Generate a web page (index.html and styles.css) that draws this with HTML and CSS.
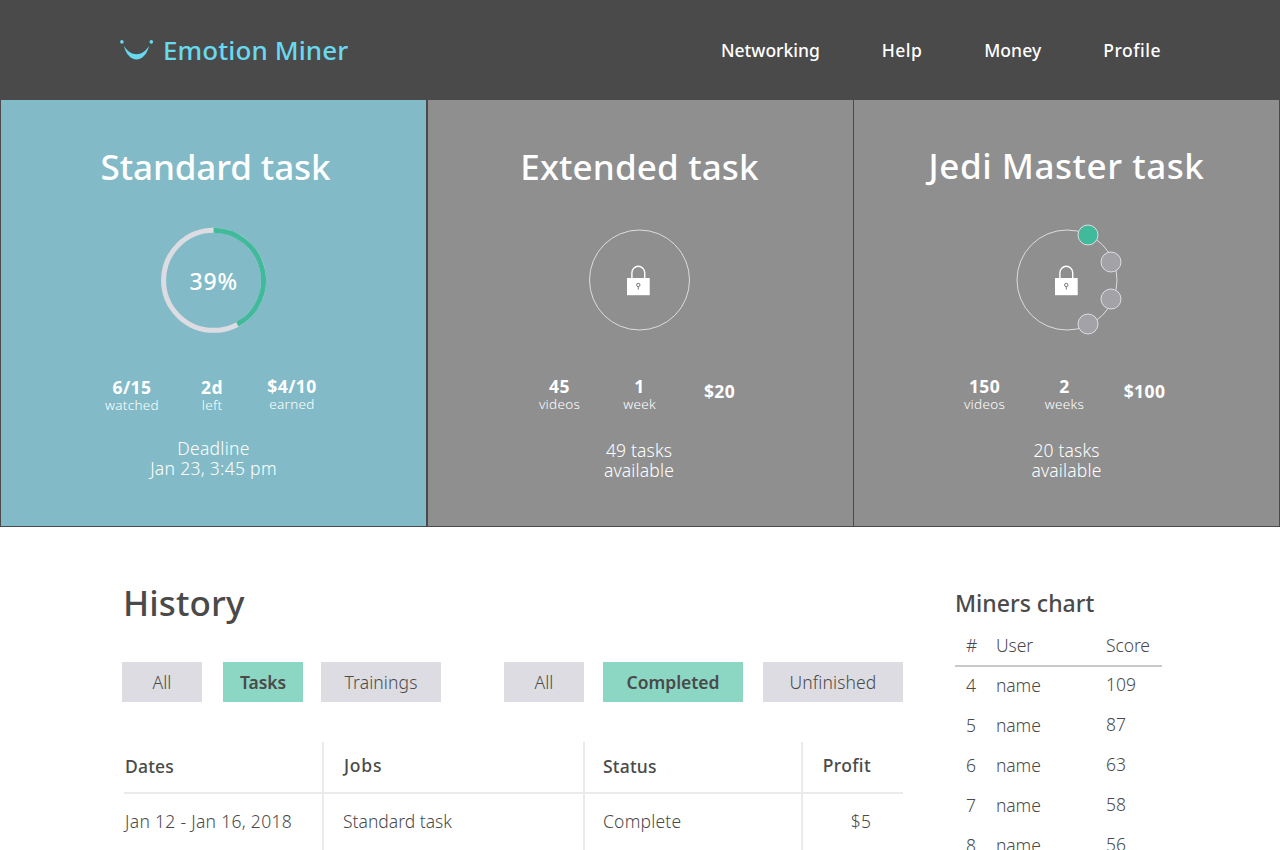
FILE: index.html
```html
<!DOCTYPE html>
<html lang="en">
<head>
<meta charset="utf-8">
<title>Emotion Miner</title>
<link rel="stylesheet" href="styles.css">
</head>
<body>
<header class="header">
  <a class="logo">
    <svg class="smile" width="34" height="20" viewBox="0 0 34 20">
      <circle cx="1.9" cy="1.9" r="1.8"/><circle cx="31.3" cy="1.9" r="1.8"/>
      <path d="M3.800 5.800C8 12 12 14.200 16.500 14.200S25 12 29.200 5.800C27 14.500 22 19.500 16.500 19.500S6 14.500 3.800 5.800Z"/>
    </svg>
    <span>Emotion Miner</span>
  </a>
  <nav class="nav">
    <a class="nav-networking">Networking</a>
    <a class="nav-help">Help</a>
    <a class="nav-money">Money</a>
    <a class="nav-profile">Profile</a>
  </nav>
</header>

<section class="cards">
  <article class="card card-standard">
    <h2>Standard task</h2>
    <svg class="dial" width="120" height="120" viewBox="0 0 120 120">
      <circle cx="59.600" cy="60.300" r="50" fill="none" stroke="#dddce2" stroke-width="5"/>
      <path d="M59.600 10.300A50 50 0 0 1 83.300 104.300" fill="none" stroke="#41ba9b" stroke-width="5"/>
      <text class="percent" x="59.700" y="69.500" text-anchor="middle">39%</text>
    </svg>
    <div class="stats">
      <div class="stat"><b>6/15</b><span>watched</span></div>
      <div class="stat"><b>2d</b><span>left</span></div>
      <div class="stat raised"><b>$4/10</b><span>earned</span></div>
    </div>
    <p class="deadline">Deadline<br>Jan 23, 3:45 pm</p>
  </article>

  <article class="card card-extended">
    <h2>Extended task</h2>
    <svg class="dial" width="120" height="120" viewBox="0 0 120 120">
      <circle cx="59.500" cy="60" r="50" fill="none" stroke="#dddce2"/>
      <path d="M51.900 58V52.700a6.400 6.400 0 0 1 12.800 0V58" fill="none" stroke="#fff" stroke-width="1.400"/>
      <rect x="47" y="58" width="22.700" height="17.200" fill="#fff"/>
      <circle cx="58.300" cy="65" r="1.700" fill="none" stroke="#777"/>
      <path d="M58.300 66.700v2.800" stroke="#777"/>
    </svg>
    <div class="stats">
      <div class="stat"><b>45</b><span>videos</span></div>
      <div class="stat"><b>1</b><span>week</span></div>
      <div class="stat price"><b>$20</b></div>
    </div>
    <p>49 tasks<br>available</p>
  </article>

  <article class="card card-jedi">
    <h2>Jedi Master task</h2>
    <svg class="dial" width="120" height="120" viewBox="0 0 120 120">
      <circle cx="60" cy="60" r="50" fill="none" stroke="#dddce2"/>
      <path d="M52.900 58V52.700a6.400 6.400 0 0 1 12.800 0V58" fill="none" stroke="#fff" stroke-width="1.400"/>
      <rect x="48" y="58" width="22.700" height="17.200" fill="#fff"/>
      <circle cx="59.300" cy="65" r="1.700" fill="none" stroke="#777"/>
      <path d="M59.300 66.700v2.800" stroke="#777"/>
      <g fill="#a2a2a7" stroke="#dddce2">
        <circle cx="81" cy="15" r="10" fill="#41ba9b"/>
        <circle cx="104" cy="42" r="10"/>
        <circle cx="104" cy="79" r="10"/>
        <circle cx="81" cy="104" r="10"/>
      </g>
    </svg>
    <div class="stats">
      <div class="stat"><b>150</b><span>videos</span></div>
      <div class="stat"><b>2</b><span>weeks</span></div>
      <div class="stat price"><b>$100</b></div>
    </div>
    <p>20 tasks<br>available</p>
  </article>
</section>

<main class="main">
  <section class="history">
    <h1>History</h1>
    <div class="filters">
      <div class="group kinds">
        <button class="btn w80">All</button>
        <button class="btn w80 active">Tasks</button>
        <button class="btn w120">Trainings</button>
      </div>
      <div class="group states">
        <button class="btn w80">All</button>
        <button class="btn w140 active">Completed</button>
        <button class="btn w140">Unfinished</button>
      </div>
    </div>
    <div class="table">
      <div class="cell head dates">Dates</div>
      <div class="cell head up jobs">Jobs</div>
      <div class="cell head">Status</div>
      <div class="cell head up profit">Profit</div>
      <div class="cell span-dates">Jan 12 - Jan 16, 2018</div>
      <div class="cell job">Standard task</div>
      <div class="cell complete">Complete</div>
      <div class="cell profit">$5</div>
    </div>
  </section>

  <aside class="chart">
    <h3>Miners chart</h3>
    <div class="row labels"><span>#</span><span>User</span><span>Score</span></div>
    <div class="row"><span>4</span><span>name</span><span class="score">109</span></div>
    <div class="row"><span>5</span><span>name</span><span class="score">87</span></div>
    <div class="row"><span>6</span><span>name</span><span class="score">63</span></div>
    <div class="row"><span>7</span><span>name</span><span class="score">58</span></div>
    <div class="row"><span>8</span><span>name</span><span class="score">56</span></div>
  </aside>
</main>
</body>
</html>
```
FILE: styles.css
```css
* { box-sizing: border-box; }

body {
  margin: 0;
  height: 850px;
  overflow: hidden;
  background: #fff;
  color: #4a4a4a;
  font: 300 17.5px/20px "Noto Sans", "Open Sans", sans-serif;
}

h1, h2, h3, p { margin: 0; font-weight: 500; }

/* Header */
.header {
  display: flex;
  justify-content: space-between;
  height: 100px;
  padding: 0 119px 0 120px;
  background: #4a4a4a;
  align-items: center;
}
.logo {
  display: flex;
  align-items: center;
  gap: 9px;
  color: #68d9ee;
  font-size: 26px;
  font-weight: 500;
  line-height: 36px;
  letter-spacing: 0.1px;
}
.smile { fill: #68d9ee; }
.nav {
  display: flex;
  gap: 62px;
  color: #fff;
  font-weight: 500;
}
.nav-networking { letter-spacing: 0; }
.nav-help { letter-spacing: 0.4px; }
.nav-money { letter-spacing: 0.1px; }
.nav-profile { letter-spacing: 0.5px; }

/* Task cards */
.cards {
  display: grid;
  grid-template-columns: 425px 425px 425px;
  gap: 1.5px;
  height: 427px;
  padding: 0 1px 1px;
  background: #4a4a4a;
}
.card {
  display: flex;
  flex-direction: column;
  align-items: center;
  padding-top: 46px;
  background: #8f8f90;
  color: #fff;
  text-align: center;
}
.card-standard { background: #82bbc7; }
.card h2 {
  font-size: 35px;
  line-height: 42px;
  white-space: nowrap;
}
.card-standard h2 { padding-left: 4px; letter-spacing: -0.1px; }
.card-extended h2 { margin-left: -1px; letter-spacing: 0.15px; }
.card-jedi { padding-top: 45px; }
.card-jedi h2 { letter-spacing: 0.55px; }
.dial { flex: none; margin-top: 32px; }
.card-jedi .dial { margin-top: 33px; }
.percent {
  fill: #fff;
  font-size: 23px;
  font-weight: 500;
  letter-spacing: 0.8px;
}
.stats {
  display: grid;
  grid-template-columns: repeat(3, 80px);
  margin: 37px 1px 0 0;
  line-height: 18px;
}
.card-standard .stats { margin: 38px 3px 0 0; }
.card-jedi .stats { margin-right: 4px; }
.stat { display: flex; flex-direction: column; }
.stat b { font-weight: 700; letter-spacing: 0.4px; }
.stat span { font-size: 13.5px; letter-spacing: 0.3px; }
.raised { margin-top: -1px; }
.price { padding-top: 5px; }
.card p { margin: 27px 2px 0 0; font-weight: 300; letter-spacing: 0.15px; }
.card-jedi p { margin-right: 0; }
.card .deadline { margin: 24px 0 0; letter-spacing: 0.3px; }

/* History */
.main { display: flex; }
.history { width: 903px; padding: 55px 0 0 122px; }
.history h1 {
  padding-left: 1px;
  font-size: 35px;
  line-height: 42px;
  letter-spacing: 0.11px;
}
.filters {
  display: flex;
  justify-content: space-between;
  margin-top: 38px;
}
.group { display: flex; }
.kinds { gap: 18px; }
.kinds .active { margin-left: 3px; }
.states { gap: 20px; }
.states .active { margin-left: -1px; }
.btn {
  height: 40px;
  padding: 0;
  border: 0;
  background: #dddce2;
  color: #4a4a4a;
  font: inherit;
  letter-spacing: 0.1px;
}
.btn.active { background: #8cd6c4; font-weight: 600; letter-spacing: -0.05px; }
.w80 { width: 80px; }
.w120 { width: 120px; }
.w140 { width: 140px; }

.table {
  display: grid;
  grid-template-columns: 198px 261px 218px 102px;
  grid-template-rows: 52px 56px;
  margin: 40px 0 0 2px;
}
.cell {
  padding: 17px 0 0 18px;
  border-left: 2px solid #ebebed;
  white-space: nowrap;
  letter-spacing: 0.12px;
}
.cell:nth-child(4n + 1) { border-left: 0; padding-left: 1px; }
.head {
  padding-top: 14px;
  border-bottom: 2px solid #ebebed;
  font-weight: 500;
  letter-spacing: 0.2px;
}
.up { padding-top: 13px; }
.jobs { padding-left: 20px; letter-spacing: 0.8px; }
.job { padding-left: 19px; letter-spacing: 0; }
.span-dates { letter-spacing: 0.3px; }
.complete { letter-spacing: 0.2px; }
.profit { padding-right: 32px; text-align: right; }
.head.profit { letter-spacing: 0.35px; }

/* Miners chart */
.chart { width: 207px; margin-left: 52px; padding-top: 61px; }
.chart h3 {
  font-size: 23px;
  line-height: 30px;
  white-space: nowrap;
  letter-spacing: 0;
}
.row {
  display: grid;
  grid-template-columns: 30px 110px 1fr;
  height: 40px;
  padding: 8px 0 0 11px;
  letter-spacing: -0.1px;
}
.labels { height: 49px; padding-top: 17px; border-bottom: 2px solid #c9c9cb; }
.score { margin-top: -1px; letter-spacing: 0; }
```
